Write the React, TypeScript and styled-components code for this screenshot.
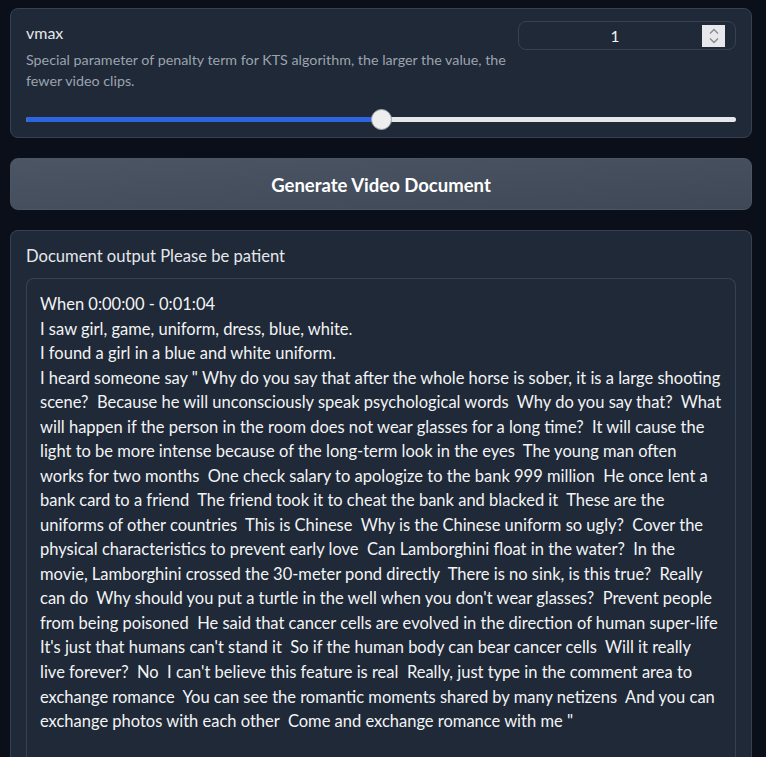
import React from "react";
import styled, { createGlobalStyle } from "styled-components";

const Global = createGlobalStyle`
  html, body { margin: 0; padding: 0; background: #0b0f19; }
  body { font-family: Lato, "Liberation Sans", sans-serif; color: #f3f4f6; }
  * { box-sizing: border-box; }
`;

const Page = styled.div`
  display: flex;
  flex-direction: column;
  gap: 20px;
  padding: 8px 14px 0 10px;
  height: 757px;
  overflow: hidden;
`;

const Panel = styled.div<{ $open?: boolean }>`
  flex-shrink: 0;
  background: #1f2937;
  border: 1px solid #374151;
  border-radius: 8px;
  padding: ${(p) => (p.$open ? "14px 15px 0 15px" : "12px 15px 8px 15px")};
  ${(p) => (p.$open ? "border-bottom: none; border-bottom-left-radius: 0; border-bottom-right-radius: 0; flex: 1 0 auto;" : "")}
`;

const HeaderRow = styled.div`
  display: flex;
  justify-content: space-between;
  align-items: flex-start;
`;

const LabelBlock = styled.div`
  display: flex;
  flex-direction: column;
  gap: 6px;
  padding-top: 2px;
`;

const Label = styled.div`
  font-size: 16px;
  color: #e5e7eb;
  line-height: 20px;
`;

const Info = styled.div`
  font-size: 14.3px;
  color: #9ca3af;
  line-height: 21px;
  width: 490px;
`;

const NumberBox = styled.div`
  width: 218px;
  height: 29px;
  border: 1px solid #374151;
  border-radius: 8px;
  display: flex;
  align-items: center;
  justify-content: center;
  padding-right: 24px;
  position: relative;
  font-size: 15.5px;
  color: #f3f4f6;
`;

const Spinner = styled.div`
  position: absolute;
  right: 10px;
  top: 3px;
  width: 23px;
  height: 22px;
  background: #e8e8ec;
  display: flex;
  align-items: center;
  justify-content: center;
`;

const SliderRow = styled.div`
  margin-top: 18px;
  height: 20px;
  display: flex;
  align-items: center;
  position: relative;
`;

const Track = styled.div`
  flex: 1;
  height: 5px;
  border-radius: 3px;
  background: #e5e7eb;
  overflow: hidden;
`;

const Fill = styled.div`
  height: 100%;
  background: #2d64e0;
`;

const Thumb = styled.div`
  position: absolute;
  top: 0;
  width: 21px;
  height: 21px;
  margin-left: -10px;
  border-radius: 50%;
  background: #ededee;
  border: 1px solid #9ca3af;
`;

const Button = styled.button`
  flex-shrink: 0;
  height: 52px;
  border: 1px solid #4b5563;
  border-radius: 8px;
  background: linear-gradient(to bottom right, #4b5563, #3f4856);
  color: #ffffff;
  font-family: Lato, "Liberation Sans", sans-serif;
  font-weight: 700;
  font-size: 18.5px;
  padding-top: 2px;
  cursor: pointer;
`;

const OutLabel = styled.div`
  font-size: 16.6px;
  color: #e5e7eb;
  line-height: 22px;
  margin-bottom: 11px;
`;

const TextArea = styled.div`
  border: 1px solid #374151;
  border-bottom: none;
  border-radius: 8px 8px 0 0;
  padding: 13px 13px 40px 13px;
  font-size: 16.5px;
  line-height: 24.53px;
  color: #f3f4f6;
  white-space: pre;
`;

const lines = [
  "When 0:00:00 - 0:01:04",
  "I saw girl, game, uniform, dress, blue, white.",
  "I found a girl in a blue and white uniform.",
  "I heard someone say \" Why do you say that after the whole horse is sober, it is a large shooting",
  "scene?  Because he will unconsciously speak psychological words  Why do you say that?  What",
  "will happen if the person in the room does not wear glasses for a long time?  It will cause the",
  "light to be more intense because of the long-term look in the eyes  The young man often",
  "works for two months  One check salary to apologize to the bank 999 million  He once lent a",
  "bank card to a friend  The friend took it to cheat the bank and blacked it  These are the",
  "uniforms of other countries  This is Chinese  Why is the Chinese uniform so ugly?  Cover the",
  "physical characteristics to prevent early love  Can Lamborghini float in the water?  In the",
  "movie, Lamborghini crossed the 30-meter pond directly  There is no sink, is this true?  Really",
  "can do  Why should you put a turtle in the well when you don't wear glasses?  Prevent people",
  "from being poisoned  He said that cancer cells are evolved in the direction of human super-life",
  "It's just that humans can't stand it  So if the human body can bear cancer cells  Will it really",
  "live forever?  No  I can't believe this feature is real  Really, just type in the comment area to",
  "exchange romance  You can see the romantic moments shared by many netizens  And you can",
  "exchange photos with each other  Come and exchange romance with me \"",
];

export default function App() {
  const pct = 50;
  return (
    <>
      <Global />
      <Page>
        <Panel>
          <HeaderRow>
            <LabelBlock>
              <Label>vmax</Label>
              <Info>
                Special parameter of penalty term for KTS algorithm, the larger the value, the fewer video clips.
              </Info>
            </LabelBlock>
            <NumberBox>
              1
              <Spinner>
                <svg width="12" height="18" viewBox="0 0 12 18" fill="none" stroke="#8a8a92" strokeWidth="1.4">
                  <path d="M2 6.5 L6 2.5 L10 6.5" />
                  <path d="M2 11.5 L6 15.5 L10 11.5" />
                </svg>
              </Spinner>
            </NumberBox>
          </HeaderRow>
          <SliderRow>
            <Track>
              <Fill style={{ width: `${pct}%` }} />
            </Track>
            <Thumb style={{ left: `${pct}%` }} />
          </SliderRow>
        </Panel>
        <Button>Generate Video Document</Button>
        <Panel $open>
          <OutLabel>Document output Please be patient</OutLabel>
          <TextArea>{lines.join("\n")}</TextArea>
        </Panel>
      </Page>
    </>
  );
}
